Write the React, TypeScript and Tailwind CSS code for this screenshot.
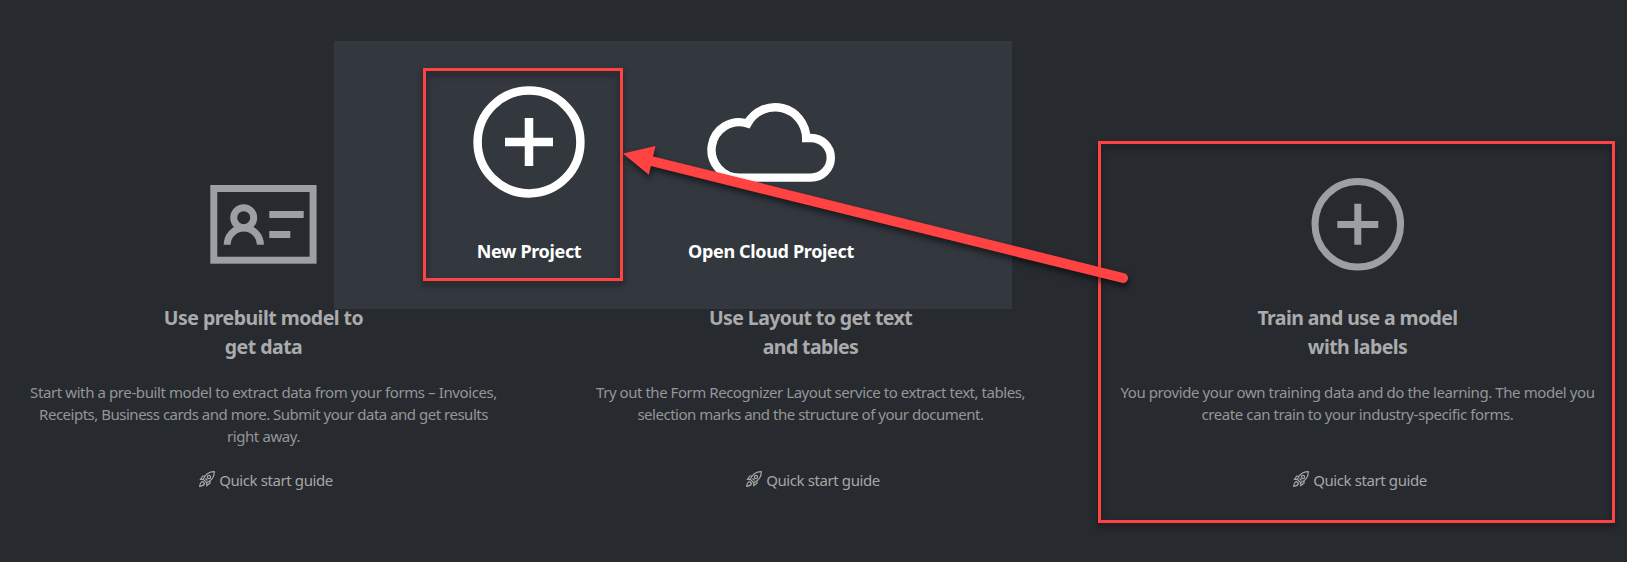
import type { ReactNode } from "react";

function ContactCardIcon() {
  return (
    <svg className="block" width="107" height="79" viewBox="210 185 107 79" fill="none" stroke="currentColor" strokeWidth="7">
      <rect x="213.8" y="188.5" width="99.3" height="71.7" />
      <circle cx="243.7" cy="217.7" r="10" />
      <path d="M227.2 244.7a16.6 16.6 0 0 1 33.2 0M269.3 214.5h34.4M269.3 234.5h21" />
    </svg>
  );
}

function AddCircleIcon() {
  return (
    <svg className="block" width="94" height="94" viewBox="0 0 94 94" fill="none" stroke="currentColor" strokeWidth="7">
      <circle cx="46.8" cy="47.3" r="42.8" />
      <path d="M26.3 47.4h41M46.8 26.8v41" />
    </svg>
  );
}

function AddCircleLargeIcon() {
  return (
    <svg className="block" width="112" height="112" viewBox="0 0 112 112" fill="none" stroke="currentColor" strokeWidth="8.5">
      <circle cx="56" cy="56" r="51.4" />
      <path d="M32 56h48M56 32v48" />
    </svg>
  );
}

function CloudIcon() {
  return (
    <svg className="block" width="128" height="80" viewBox="707 102 128 80" fill="none" stroke="currentColor" strokeWidth="8.4">
      <path d="M739.6 177.6a27.7 27.7 0 1 1 8 -54.1A31.2 31.2 0 0 1 806.2 138H811a19.8 19.8 0 0 1 0 39.6z" />
    </svg>
  );
}

function RocketIcon() {
  return (
    <svg className="block" width="16" height="16" viewBox="0 0 16 16" fill="none" stroke="currentColor" strokeWidth="1.2">
      <path d="M15.3 .7C11 .7 8.500 2 6.200 5L4.300 8.300 7.700 11.700 11 9.800C14 7.500 15.300 5 15.300 .7z" />
      <circle cx="10" cy="6" r="1.6" />
      <path d="M6.200 5H3.800L1.500 8.300 4.300 8.300M11 9.800V12.200L7.700 14.500V11.700M6.500 7.500l2 2M3.500 10.500C1.500 11 1 13 .7 15.300C3 15 5 14.500 5.500 12.500z" />
    </svg>
  );
}

type Line = { text: string; tracking: string };
type Option = { icon: ReactNode; title: [string, string]; titleTracking: string; lines: Line[] };

const options: Option[] = [
  {
    icon: <ContactCardIcon />,
    title: ["Use prebuilt model to", "get data"],
    titleTracking: "tracking-[-0.52px]",
    lines: [
      {
        text: "Start with a pre-built model to extract data from your forms – Invoices,",
        tracking: "tracking-[-0.4px]",
      },
      {
        text: "Receipts, Business cards and more. Submit your data and get results",
        tracking: "tracking-[-0.49px]",
      },
      { text: "right away.", tracking: "tracking-[-0.4px]" },
    ],
  },
  {
    icon: null,
    title: ["Use Layout to get text", "and tables"],
    titleTracking: "tracking-[-0.59px]",
    lines: [
      {
        text: "Try out the Form Recognizer Layout service to extract text, tables,",
        tracking: "tracking-[-0.46px]",
      },
      {
        text: "selection marks and the structure of your document.",
        tracking: "tracking-[-0.48px]",
      },
    ],
  },
  {
    icon: <AddCircleIcon />,
    title: ["Train and use a model", "with labels"],
    titleTracking: "tracking-[-0.59px]",
    lines: [
      {
        text: "You provide your own training data and do the learning. The model you",
        tracking: "tracking-[-0.41px]",
      },
      {
        text: "create can train to your industry-specific forms.",
        tracking: "tracking-[-0.42px]",
      },
    ],
  },
];

function OptionCard({ icon, title, titleTracking, lines }: Option) {
  return (
    <section className="flex w-[547px] shrink-0 flex-col items-center whitespace-nowrap text-center">
      <div className="flex h-[128px] items-center text-[#9e9fa2]">{icon}</div>
      <h2 className={`mt-[15px] text-[19.5px] font-bold leading-[29px] text-[#a9abac] ${titleTracking}`}>
        {title[0]}
        <br />
        {title[1]}
      </h2>
      <div className="mt-[20px] h-[66px] text-[15px] leading-[22px] text-[#949697]">
        {lines.map((line) => (
          <p key={line.text} className={line.tracking}>
            {line.text}
          </p>
        ))}
      </div>
      <a className="mt-[22px] flex items-center gap-1 pl-[5px] text-[15px] leading-[22px] tracking-[-0.4px] text-[#a5a7a9]">
        <span className="-mt-0.5">
          <RocketIcon />
        </span>
        Quick start guide
      </a>
    </section>
  );
}

function ProjectDialog() {
  return (
    <div className="absolute left-[334px] top-[41px] flex h-[268px] w-[678px] bg-[#33373e] text-[18px] font-bold leading-6 tracking-[-0.34px] text-white">
      <div className="ml-[89px] flex w-[212px] flex-col items-center pt-[45px]">
        <AddCircleLargeIcon />
        <span className="mt-[41px]">New Project</span>
      </div>
      <div className="ml-[30px] flex w-[212px] flex-col items-center pt-[61px]">
        <CloudIcon />
        <span className="mt-[57px]">Open Cloud Project</span>
      </div>
    </div>
  );
}

function Arrow() {
  return (
    <svg
      className="absolute left-0 top-0 drop-shadow-[1px_4px_3px_rgba(0,0,0,0.55)]"
      width="1627"
      height="562"
      viewBox="0 0 1627 562"
    >
      <path d="M645 159.500L1123 278" stroke="#ff4242" strokeWidth="10" strokeLinecap="round" />
      <path d="M623 153.500L655.500 146L648.800 174.700z" fill="#ff4242" />
    </svg>
  );
}

export default function App() {
  return (
    <main className="relative h-[562px] w-[1627px] overflow-hidden bg-[#272a2f] font-['Noto_Sans',sans-serif]">
      <div className="-ml-[10px] flex pt-[160px]">
        {options.map((option) => (
          <OptionCard key={option.title[0]} {...option} />
        ))}
      </div>
      <ProjectDialog />
      <div className="absolute left-[423px] top-[68px] h-[213px] w-[200px] border-3 border-[#ff4242] drop-shadow-[0px_4px_3px_rgba(0,0,0,0.5)]" />
      <div className="absolute left-[1098px] top-[141px] h-[382px] w-[517px] border-3 border-[#ff4242] drop-shadow-[0px_4px_3px_rgba(0,0,0,0.5)]" />
      <Arrow />
    </main>
  );
}
